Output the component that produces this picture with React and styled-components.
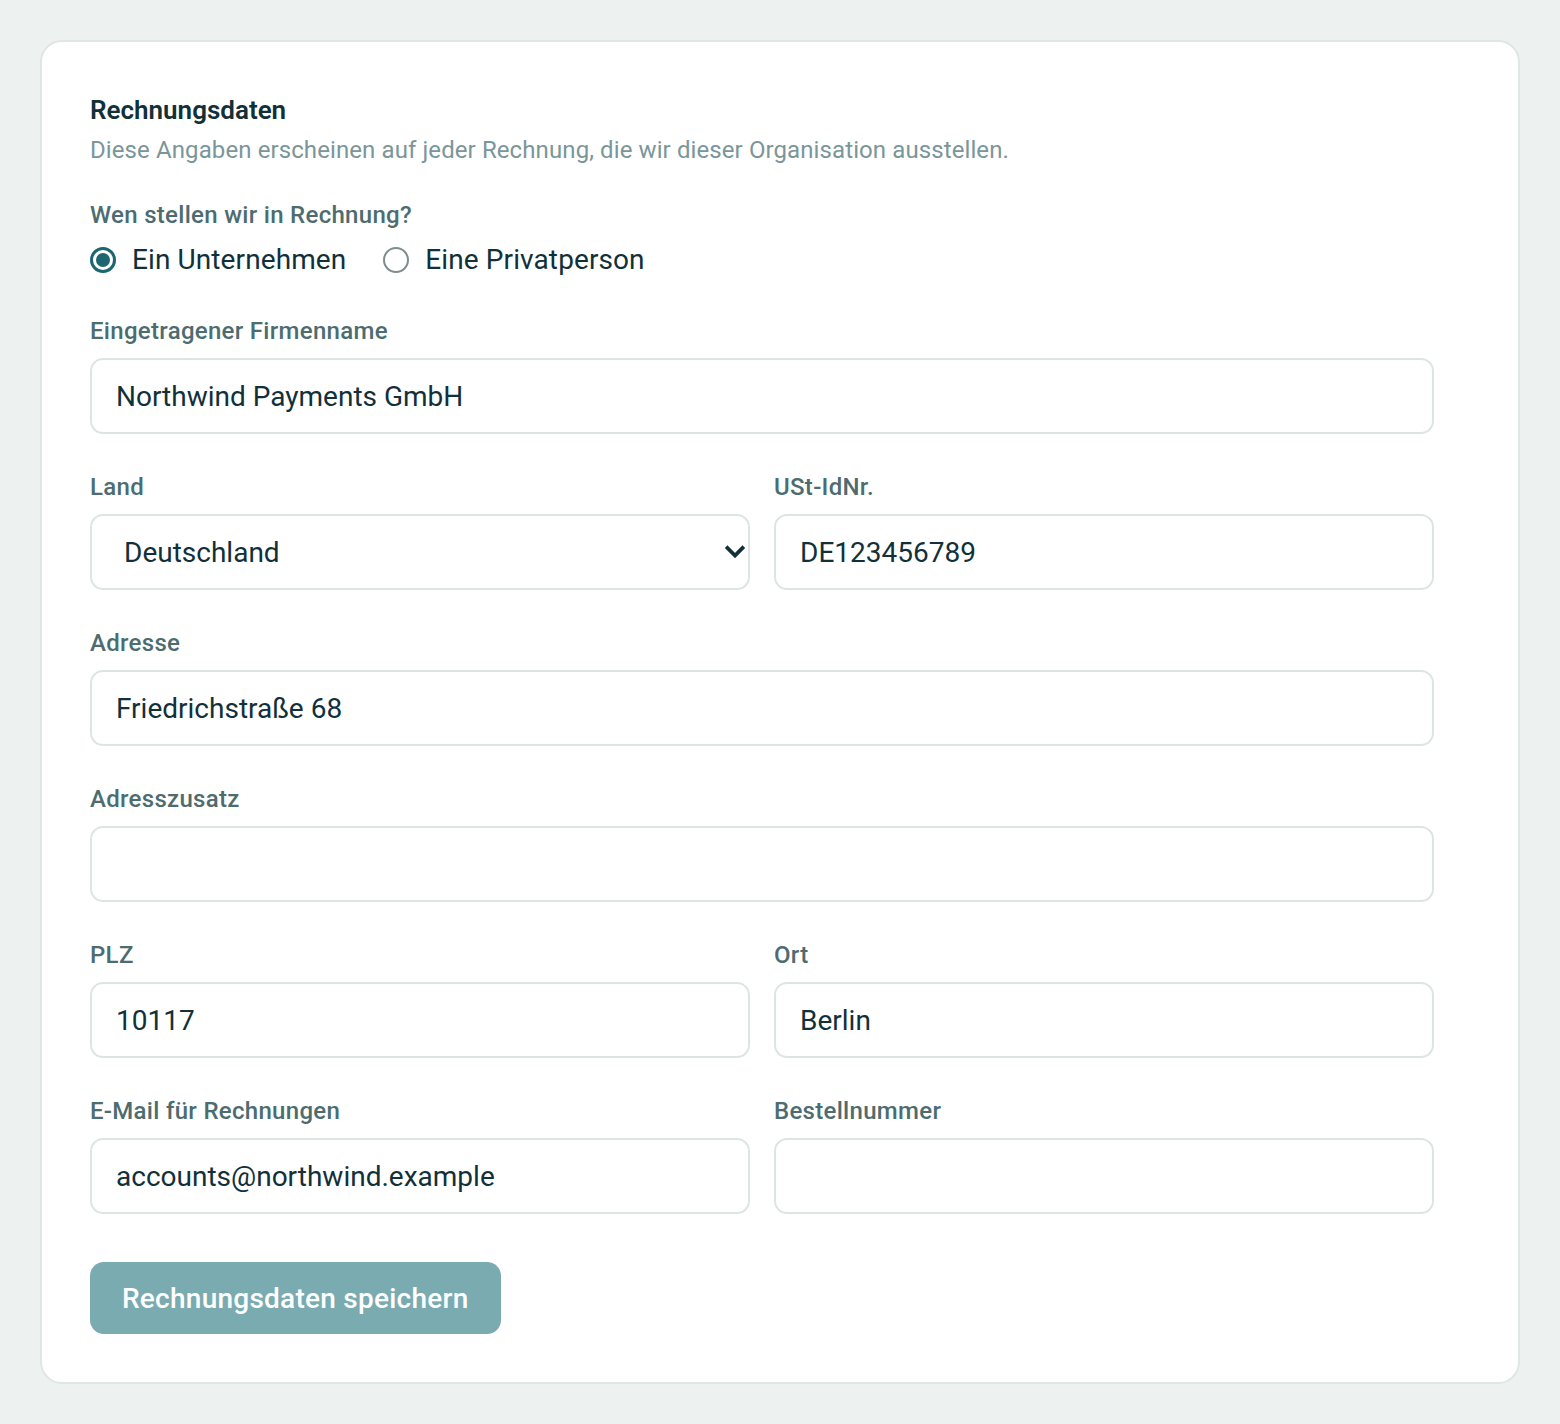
import React from "react";
import styled, { createGlobalStyle } from "styled-components";

const Global = createGlobalStyle`
  html, body { margin: 0; padding: 0; background: #edf1f0; }
  body { font-family: Roboto, "Liberation Sans", sans-serif; -webkit-font-smoothing: antialiased; }
  * { box-sizing: border-box; }
`;

const Page = styled.div`
  padding: 40px;
  min-height: 1424px;
`;

const Card = styled.section`
  background: #ffffff;
  border: 2px solid #dfe6e5;
  border-radius: 22px;
  padding: 50px 84px 48px 48px;
`;

const Content = styled.div`
  display: flex;
  flex-direction: column;
`;

const Title = styled.h2`
  margin: 0;
  font-size: 26px;
  line-height: 36px;
  font-weight: 600;
  color: #123038;
`;

const Subtitle = styled.p`
  margin: 6px 0 0;
  font-size: 24px;
  line-height: 32px;
  letter-spacing: 0.1px;
  color: #7a9699;
`;

const Label = styled.label`
  display: block;
  padding: 0;
  font-size: 24px;
  line-height: 28px;
  letter-spacing: 0.3px;
  font-weight: 500;
  color: #4d6c70;
  margin-bottom: 13px;
`;

const RadioGroup = styled.fieldset`
  border: 0;
  margin: 35px 0 0;
  padding: 0;
  min-width: 0;
`;

const RadioRow = styled.div`
  display: flex;
  align-items: center;
  gap: 37px;
`;

const RadioOption = styled.label`
  display: flex;
  align-items: center;
  gap: 16px;
  font-size: 28px;
  line-height: 36px;
  letter-spacing: 0.1px;
  color: #12303a;
  cursor: pointer;
`;

const RadioCircle = styled.span`
  width: 26px;
  height: 26px;
  border-radius: 50%;
  border: ${p => (p.$checked ? "3px solid #1b6670" : "2px solid #7f8c8e")};
  display: flex;
  align-items: center;
  justify-content: center;
  &::after {
    content: "";
    width: 14px;
    height: 14px;
    border-radius: 50%;
    background: ${p => (p.$checked ? "#1b6670" : "transparent")};
  }
`;

const Fields = styled.div`
  display: grid;
  grid-template-columns: 1fr 1fr;
  column-gap: 24px;
  row-gap: 39px;
  margin-top: 39px;
`;

const Field = styled.div`
  grid-column: ${p => (p.$full ? "1 / -1" : "auto")};
  display: flex;
  flex-direction: column;
`;

const Input = styled.input`
  width: 100%;
  height: 76px;
  border: 2px solid #dde5e4;
  border-radius: 13px;
  padding: 0 24px;
  font-family: inherit;
  font-size: 28px;
  color: #12303a;
  background: #fff;
  outline: none;
`;

const SelectWrap = styled.div`
  position: relative;
`;

const Select = styled.select`
  width: 100%;
  height: 76px;
  border: 2px solid #dde5e4;
  border-radius: 13px;
  padding: 0 60px 0 32px;
  font-family: inherit;
  font-size: 28px;
  color: #12303a;
  background: #fff;
  appearance: none;
  -webkit-appearance: none;
  outline: none;
`;

const Chevron = styled.svg`
  position: absolute;
  right: 0;
  top: 50%;
  transform: translateY(-50%);
  pointer-events: none;
`;

const Actions = styled.div`
  margin-top: 48px;
`;

const Button = styled.button`
  height: 72px;
  padding: 0 32px;
  border: 0;
  border-radius: 14px;
  background: #7aabb1;
  color: #ffffff;
  font-family: inherit;
  font-size: 28px;
  letter-spacing: 0.25px;
  font-weight: 500;
  cursor: pointer;
`;

export default function App() {
  return (
    <>
      <Global />
      <Page>
        <Card>
          <Content>
            <Title>Rechnungsdaten</Title>
            <Subtitle>Diese Angaben erscheinen auf jeder Rechnung, die wir dieser Organisation ausstellen.</Subtitle>

            <RadioGroup>
              <Label as="legend">Wen stellen wir in Rechnung?</Label>
              <RadioRow>
                <RadioOption>
                  <RadioCircle $checked />
                  Ein Unternehmen
                </RadioOption>
                <RadioOption>
                  <RadioCircle />
                  Eine Privatperson
                </RadioOption>
              </RadioRow>
            </RadioGroup>

            <Fields>
              <Field $full>
                <Label>Eingetragener Firmenname</Label>
                <Input defaultValue="Northwind Payments GmbH" />
              </Field>
              <Field>
                <Label>Land</Label>
                <SelectWrap>
                  <Select defaultValue="DE">
                    <option value="DE">Deutschland</option>
                    <option value="AT">Österreich</option>
                    <option value="CH">Schweiz</option>
                  </Select>
                  <Chevron width="30" height="20" viewBox="0 0 30 20">
                    <path d="M7.5 6 L15 13.5 L22.5 6" fill="none" stroke="#12303a" strokeWidth="3.8" strokeLinecap="square" />
                  </Chevron>
                </SelectWrap>
              </Field>
              <Field>
                <Label>USt-IdNr.</Label>
                <Input defaultValue="DE123456789" />
              </Field>
              <Field $full>
                <Label>Adresse</Label>
                <Input defaultValue="Friedrichstraße 68" />
              </Field>
              <Field $full>
                <Label>Adresszusatz</Label>
                <Input defaultValue="" />
              </Field>
              <Field>
                <Label>PLZ</Label>
                <Input defaultValue="10117" />
              </Field>
              <Field>
                <Label>Ort</Label>
                <Input defaultValue="Berlin" />
              </Field>
              <Field>
                <Label>E-Mail für Rechnungen</Label>
                <Input defaultValue="accounts@northwind.example" />
              </Field>
              <Field>
                <Label>Bestellnummer</Label>
                <Input defaultValue="" />
              </Field>
            </Fields>

            <Actions>
              <Button type="button">Rechnungsdaten speichern</Button>
            </Actions>
          </Content>
        </Card>
      </Page>
    </>
  );
}
